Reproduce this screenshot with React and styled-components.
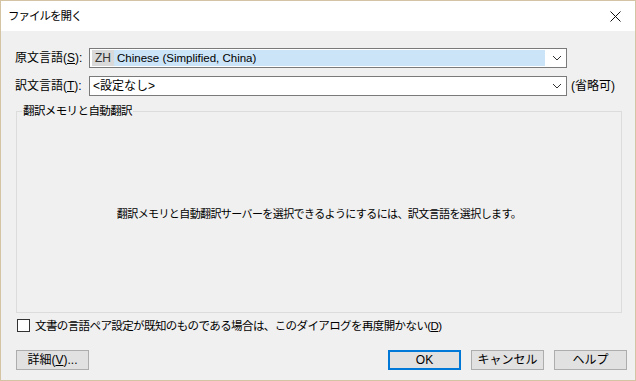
import styled, { createGlobalStyle } from "styled-components";

const GlobalStyle = createGlobalStyle`
  html, body {
    margin: 0;
    padding: 0;
    background: #ffffff;
  }
  body {
    font-family: "Liberation Sans", "Noto Sans CJK JP", sans-serif;
    font-size: 12px;
    color: #000;
  }
`;

const Window = styled.div`
  width: 636px;
  height: 381px;
  box-sizing: border-box;
  border: 1px solid #d4c4a4;
  display: flex;
  flex-direction: column;
  background: #f0f0f0;
`;

const TitleBar = styled.div`
  height: 30px;
  flex: none;
  background: #ffffff;
  display: flex;
  align-items: center;
  justify-content: space-between;
  padding: 0 14px 0 7px;
`;

const Title = styled.span`
  font-size: 11.5px;
  line-height: 14px;
  letter-spacing: -1px;
`;

const Body = styled.div`
  flex: 1;
  display: flex;
  flex-direction: column;
  padding: 17px 8px 0 14px;
`;

const FieldRow = styled.div`
  display: flex;
  align-items: center;
  height: 20px;
  margin-bottom: ${(p) => p.$gap || 0}px;
`;

const Label = styled.span`
  width: 74px;
  flex: none;
  line-height: 14px;
  u {
    text-decoration: underline;
  }
`;

const Combo = styled.div`
  width: 478px;
  height: 20px;
  box-sizing: border-box;
  border: 1px solid #7a7a7a;
  background: #ffffff;
  display: flex;
  align-items: center;
  padding: 0 0 0 2px;
`;

const Badge = styled.span`
  background: #d9d9d9;
  color: #333;
  height: 16px;
  line-height: 16px;
  padding: 0 3px;
  font-size: 12px;
`;

const Selection = styled.span`
  background: #cce4f7;
  height: 16px;
  line-height: 16px;
  font-size: 11.5px;
  flex: 1;
  padding-left: 3px;
  margin-right: 7px;
`;

const Plain = styled.span`
  flex: 1;
  line-height: 16px;
  padding-left: 1px;
`;

const Chevron = styled.svg`
  width: 10px;
  height: 6px;
  flex: none;
  margin-right: 4px;
  margin-left: ${(p) => (p.$push ? "auto" : "0")};
`;

const Hint = styled.span`
  margin-left: 4px;
  line-height: 14px;
`;

const Group = styled.fieldset`
  margin: 8px 0 0 1px;
  padding: 0;
  width: 606px;
  height: 209px;
  box-sizing: border-box;
  border: 1px solid #dcdcdc;
`;

const Legend = styled.legend`
  padding: 0 1px;
  margin-left: 5px;
  line-height: 14px;
  font-size: 11.5px;
  letter-spacing: -0.6px;
`;

const GroupBody = styled.div`
  height: 192px;
  display: flex;
  align-items: center;
  justify-content: center;
`;

const GroupText = styled.p`
  margin: 0;
  line-height: 14px;
  font-size: 11px;
  letter-spacing: -0.6px;
`;

const CheckRow = styled.label`
  display: flex;
  align-items: center;
  margin: 5px 0 0 2px;
  height: 14px;
  gap: 5px;
`;

const CheckText = styled.span`
  font-size: 11.5px;
  letter-spacing: -0.6px;
`;

const Box = styled.span`
  width: 13px;
  height: 13px;
  box-sizing: border-box;
  border: 1px solid #333333;
  background: #ffffff;
  flex: none;
`;

const ButtonBar = styled.div`
  display: flex;
  align-items: center;
  margin-top: 18px;
  margin-right: 0;
`;

const Button = styled.div`
  width: 73px;
  height: 20px;
  box-sizing: border-box;
  border: 1px solid ${(p) => (p.$primary ? "#0078d7" : "#adadad")};
  box-shadow: ${(p) => (p.$primary ? "inset 0 0 0 1px #0078d7" : "none")};
  background: #e1e1e1;
  display: flex;
  align-items: center;
  justify-content: center;
  line-height: 14px;
  margin-left: ${(p) => p.$ml || 0}px;
`;

const Spacer = styled.div`
  flex: 1;
`;

const ChevronIcon = ({ push }) => (
  <Chevron $push={push} viewBox="0 0 10 6">
    <path d="M1 1 L5 5 L9 1" fill="none" stroke="#333" strokeWidth="1" />
  </Chevron>
);

export default function App() {
  return (
    <>
      <GlobalStyle />
      <Window>
        <TitleBar>
          <Title>ファイルを開く</Title>
          <svg width="11" height="11" viewBox="0 0 11 11">
            <path d="M0.5 0.5 L10.5 10.5 M10.5 0.5 L0.5 10.5" stroke="#111" strokeWidth="1" />
          </svg>
        </TitleBar>
        <Body>
          <FieldRow $gap={8}>
            <Label>
              原文言語(<u>S</u>):
            </Label>
            <Combo>
              <Badge>ZH</Badge>
              <Selection>Chinese (Simplified, China)</Selection>
              <ChevronIcon />
            </Combo>
          </FieldRow>
          <FieldRow>
            <Label>
              訳文言語(<u>T</u>):
            </Label>
            <Combo>
              <Plain>&lt;設定なし&gt;</Plain>
              <ChevronIcon push />
            </Combo>
            <Hint>(省略可)</Hint>
          </FieldRow>
          <Group>
            <Legend>翻訳メモリと自動翻訳</Legend>
            <GroupBody>
              <GroupText>
                翻訳メモリと自動翻訳サーバーを選択できるようにするには、訳文言語を選択します。
              </GroupText>
            </GroupBody>
          </Group>
          <CheckRow>
            <Box />
            <CheckText>
              文書の言語ペア設定が既知のものである場合は、このダイアログを再度開かない(<u>D</u>)
            </CheckText>
          </CheckRow>
          <ButtonBar>
            <Button $ml={1}>
              <span>
                詳細(<u>V</u>)...
              </span>
            </Button>
            <Spacer />
            <Button $primary>OK</Button>
            <Button $ml={10}>キャンセル</Button>
            <Button $ml={10}>ヘルプ</Button>
          </ButtonBar>
        </Body>
      </Window>
    </>
  );
}
